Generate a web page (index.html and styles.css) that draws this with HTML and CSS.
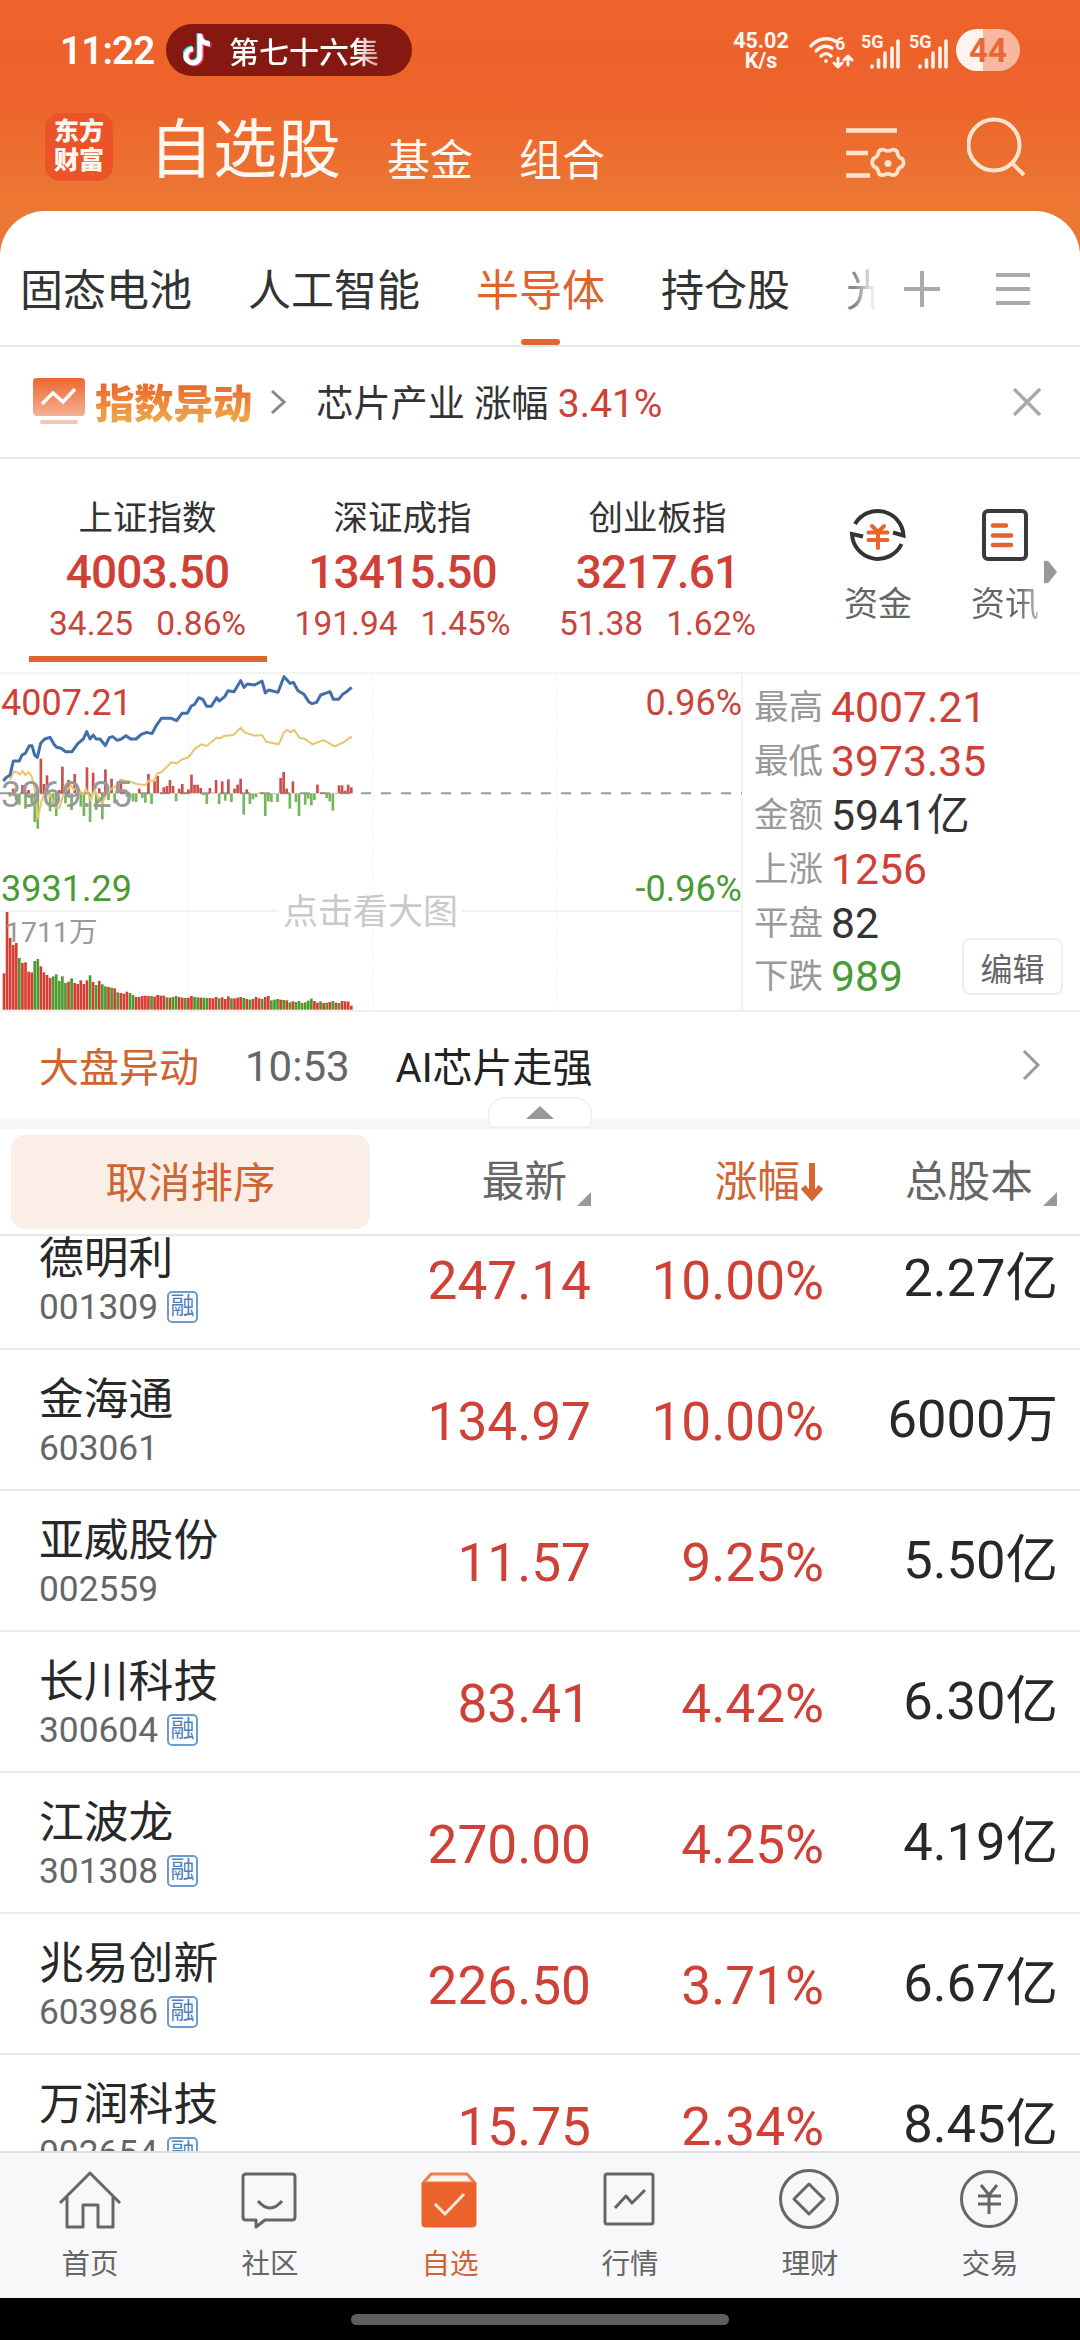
FILE: index.html
```html
<!DOCTYPE html>
<html lang="zh-CN">
<head>
    <meta charset="UTF-8">
    <meta name="viewport" content="width=device-width, initial-scale=1.0">
    <title>自选股</title>
    <link rel="stylesheet" href="styles.css">
</head>
<body>
    <header class="top">
        <div class="status">
            <span class="clock">11:22</span>
            <div class="island">
                <svg width="30" height="34" viewBox="0 0 30 34" fill="none" stroke-width="5">
                    <path d="M17 1v22a7 7 0 1 1-7-7M17 3c1 5 5 8 10 8" stroke="#25e4dd" transform="translate(-1 -1)"/>
                    <path d="M17 1v22a7 7 0 1 1-7-7M17 3c1 5 5 8 10 8" stroke="#f02c60" transform="translate(1.5 1)"/>
                    <path d="M17 1v22a7 7 0 1 1-7-7M17 3c1 5 5 8 10 8" stroke="#fff"/>
                </svg>
                <span class="island-text">第七十六集</span>
            </div>
            <div class="speed"><span>45.02</span><span>K/s</span></div>
            <svg class="wifi" width="46" height="36" viewBox="0 0 46 36" fill="none" stroke="#fff3ec" stroke-width="3.4" stroke-linecap="round">
                <path d="M3 13c7-8 18-9 24-5M8 18c5-5 11-6 16-3M13 23c3-3 7-3 10 0"/>
                <circle cx="18" cy="28" r="1" fill="#fff3ec" stroke-width="2"/>
                <path d="M30 25v9m-4-4 4 4 4-4M40 32v-9m-4 4 4-4 4 4" stroke-width="3" stroke-linejoin="round"/>
                <text x="27" y="17" class="sig-text">6</text>
            </svg>
            <svg class="signal" width="40" height="36" viewBox="0 0 40 36">
                <text x="0" y="15" class="sig-text">5G</text>
                <path d="M11 34v-1M17.500 34v-7M24 34V20M31 34V15M37 34V8" stroke="#fff3ec" stroke-width="3.600" stroke-linecap="round"/>
            </svg>
            <svg class="signal" width="40" height="36" viewBox="0 0 40 36">
                <text x="0" y="15" class="sig-text">5G</text>
                <path d="M11 34v-1M17.500 34v-7M24 34V20M31 34V15M37 34V8" stroke="#fff3ec" stroke-width="3.600" stroke-linecap="round"/>
            </svg>
            <span class="battery">44</span>
        </div>
        <div class="titlebar">
            <div class="logo">东方<br>财富</div>
            <h1>自选股</h1>
            <span class="sub">基金</span>
            <span class="sub">组合</span>
            <svg class="filter" width="62" height="56" viewBox="0 0 62 56" fill="none" stroke="#ffe3cf" stroke-width="4.500">
                <path d="M0 5.500h51M0 28h22M0 50.500h24"/>
                <path d="M37.500 25q4 2.500 8 0 5-1 6 3 .5 5 5 6.500 3 4.500 0 8-4.500 1.500-5 6-2 4-6 3-4-2.500-8 0-5 1-6-3-.5-4.500-5-6-3-4.500 0-8.500 4.500-1.500 5-6 1-4 6-3z" stroke-width="4" transform="translate(2.500 1)  scale(.95)"/>
                <circle cx="42" cy="38.500" r="3.500" fill="#ffe3cf" stroke="none"/>
            </svg>
            <svg class="search" width="60" height="60" viewBox="0 0 60 60" fill="none" stroke="#ffe3cf" stroke-width="4">
                <circle cx="27" cy="28" r="25.500"/>
                <path d="m44 45 13 13"/>
            </svg>
        </div>
    </header>

    <main class="sheet">
        <nav class="tabs">
            <div class="tabs-scroll">
                <span>固态电池</span>
                <span>人工智能</span>
                <span class="on">半导体</span>
                <span>持仓股</span>
                <span class="fade">光</span>
            </div>
            <svg width="36" height="36" viewBox="0 0 36 36" stroke="#aaa" stroke-width="4"><path d="M18 0v36M0 18h36"/></svg>
            <svg class="burger" width="34" height="34" viewBox="0 0 34 34" stroke="#aaa" stroke-width="4"><path d="M0 3h34M0 17h34M0 31h34"/></svg>
        </nav>

        <section class="notice">
            <svg width="52" height="48" viewBox="0 0 52 48">
                <defs>
                    <linearGradient id="g1" x1="0" y1="0" x2="0" y2="1">
                        <stop offset="0" stop-color="#ee6630"/>
                        <stop offset="1" stop-color="#f4b194"/>
                    </linearGradient>
                </defs>
                <rect width="52" height="38" rx="4" fill="url(#g1)"/>
                <path d="m9 26 11-11 10 9 12-13" fill="none" stroke="#fff" stroke-width="3.500"/>
                <rect x="7" y="42" width="38" height="4" rx="2" fill="#f1c8b4"/>
            </svg>
            <b>指数异动</b>
            <svg class="arrow" width="16" height="26" viewBox="0 0 16 26" fill="none" stroke="#888" stroke-width="3"><path d="m2 2 12 11L2 24"/></svg>
            <span class="notice-text">芯片产业 涨幅 <em>3.41%</em></span>
            <svg class="close" width="28" height="28" viewBox="0 0 28 28" stroke="#aaa" stroke-width="3.500"><path d="m1 1 26 26M27 1 1 27"/></svg>
        </section>

        <section class="indexes">
            <div class="index on">
                <span class="name">上证指数</span>
                <strong>4003.50</strong>
                <span class="chg"><i>34.25</i><i>0.86%</i></span>
            </div>
            <div class="index">
                <span class="name">深证成指</span>
                <strong>13415.50</strong>
                <span class="chg"><i>191.94</i><i>1.45%</i></span>
            </div>
            <div class="index">
                <span class="name">创业板指</span>
                <strong>3217.61</strong>
                <span class="chg"><i>51.38</i><i>1.62%</i></span>
            </div>
            <div class="tool money">
                <svg width="60" height="60" viewBox="0 0 60 60" fill="none" stroke="#333" stroke-width="4">
                    <path d="M7 20A26 26 0 0 1 55.500 31.500L45 28.500M53.500 40A26 26 0 0 1 4 30L15 32.500"/>
                    <path d="m24 22 6 6 6-6M20.500 28.500h19M20.500 36h19M30 28v16" stroke="#ea642c" stroke-linecap="round"/>
                </svg>
                <span>资金</span>
            </div>
            <div class="tool news">
                <svg width="60" height="60" viewBox="0 0 60 60" fill="none" stroke="#3a3a3a" stroke-width="4">
                    <rect x="9" y="7" width="42" height="48" rx="4"/>
                    <path d="M18 21.500h13M18 31.500h18M18 41h18" stroke="#e2632d" stroke-width="4.500" stroke-linecap="round"/>
                </svg>
                <span>资讯</span>
            </div>
            <svg class="more" width="14" height="24" viewBox="0 0 14 24"><path d="M0 1q3-1 5 1l8 10-8 10q-2 2-5 1z" fill="#999"/></svg>
        </section>

        <section class="market">
            <div class="chart">
                <svg id="chart" width="742" height="337" viewBox="0 27 2226 1011">
                    <g stroke="#e6e6e6" stroke-width="3" stroke-dasharray="4 6">
                        <path d="M566 30v1004M1119 30v1004M1671 30v1004"/>
                    </g>
                    <path d="M0 738h835M1386 738h840" stroke="#eee" stroke-width="5"/>
                    <path d="M0 385h1055M1083 385h1143" stroke="#999" stroke-width="6" stroke-dasharray="30 30"/>
                    <g id="bars"></g>
                    <polyline fill="none" stroke="#e9c46d" stroke-width="6" points="30,345 40,320 52,322 60,328 68,318 76,330 86,322 94,332 102,360 108,400 114,460 124,410 132,388 146,385 156,400 166,428 178,428 190,390 202,375 212,360 222,375 232,365 248,390 258,372 272,405 284,375 294,395 306,415 318,390 330,375 345,365 366,345 390,350 410,357 436,360 446,347 462,347 472,325 484,322 514,292 530,295 546,283 564,278 586,250 604,238 620,243 650,218 660,220 672,213 700,210 722,188 734,202 764,212 786,210 798,230 836,238 852,202 862,195 872,202 882,195 898,218 914,222 938,238 970,225 1004,244 1030,232 1055,215"/>
                    <polyline fill="none" stroke="#426eae" stroke-width="9" stroke-linejoin="round" points="10,348 18,338 30,330 40,288 58,288 66,270 76,265 88,242 96,242 104,270 112,277 122,235 134,222 150,217 162,238 170,247 184,250 196,260 216,260 234,235 250,222 260,200 270,222 280,210 288,222 300,222 316,242 328,218 338,215 352,226 364,222 378,212 392,222 408,222 424,208 440,202 456,206 468,183 484,160 514,160 530,167 546,145 562,145 574,123 584,118 596,98 608,103 620,124 634,124 650,98 658,108 674,95 684,77 702,80 722,47 732,67 742,57 764,60 786,48 796,84 806,75 834,82 852,35 870,55 880,52 894,77 912,88 926,110 936,116 950,112 962,90 990,80 1000,103 1016,103 1028,88 1040,80 1055,67"/>
                </svg>
                <span class="lab high">4007.21</span>
                <span class="lab mid">3969.25</span>
                <span class="lab low">3931.29</span>
                <span class="lab pct-high">0.96%</span>
                <span class="lab pct-low">-0.96%</span>
                <span class="lab vol">1711万</span>
                <span class="lab tip">点击看大图</span>
            </div>
            <div class="stats">
                <p><span>最高</span><b class="red">4007.21</b></p>
                <p><span>最低</span><b class="red">3973.35</b></p>
                <p><span>金额</span><b>5941亿</b></p>
                <p><span>上涨</span><b class="red">1256</b></p>
                <p><span>平盘</span><b>82</b></p>
                <p><span>下跌</span><b class="green">989</b></p>
                <button class="edit">编辑</button>
            </div>
        </section>

        <section class="flash">
            <span class="flash-tag">大盘异动</span>
            <span class="flash-time">10:53</span>
            <span class="flash-text">AI芯片走强</span>
            <svg width="18" height="32" viewBox="0 0 18 32" fill="none" stroke="#999" stroke-width="3"><path d="m2 2 14 14L2 30"/></svg>
            <div class="handle"><svg width="28" height="13" viewBox="0 0 28 13"><path d="M14 0 28 13H0z" fill="#999"/></svg></div>
        </section>

        <section class="thead">
            <button class="reset">取消排序</button>
            <span class="c1">最新<i class="tri"></i></span>
            <span class="c2">涨幅<svg width="22" height="40" viewBox="0 0 22 40" fill="none" stroke="#d9662e"><path d="M11 1v34" stroke-width="6"/><path d="m2 25 9 10 9-10" stroke-width="6"/></svg></span>
            <span class="c3">总股本<i class="tri"></i></span>
        </section>

        <section class="list">
            <div class="row"><div class="stock"><span>德明利</span><small>001309<i>融</i></small></div><span class="c1">247.14</span><span class="c2">10.00%</span><span class="c3">2.27亿</span></div>
            <div class="row"><div class="stock"><span>金海通</span><small>603061</small></div><span class="c1">134.97</span><span class="c2">10.00%</span><span class="c3">6000万</span></div>
            <div class="row"><div class="stock"><span>亚威股份</span><small>002559</small></div><span class="c1">11.57</span><span class="c2">9.25%</span><span class="c3">5.50亿</span></div>
            <div class="row"><div class="stock"><span>长川科技</span><small>300604<i>融</i></small></div><span class="c1">83.41</span><span class="c2">4.42%</span><span class="c3">6.30亿</span></div>
            <div class="row"><div class="stock"><span>江波龙</span><small>301308<i>融</i></small></div><span class="c1">270.00</span><span class="c2">4.25%</span><span class="c3">4.19亿</span></div>
            <div class="row"><div class="stock"><span>兆易创新</span><small>603986<i>融</i></small></div><span class="c1">226.50</span><span class="c2">3.71%</span><span class="c3">6.67亿</span></div>
            <div class="row"><div class="stock"><span>万润科技</span><small>002654<i>融</i></small></div><span class="c1">15.75</span><span class="c2">2.34%</span><span class="c3">8.45亿</span></div>
        </section>
    </main>

    <footer class="bottom">
        <a>
            <svg width="64" height="64" viewBox="0 0 64 64"><path d="M2 35 32 5l30 30M9 29v30h16V37h15v22h15V29"/></svg>
            首页
        </a>
        <a>
            <svg width="64" height="64" viewBox="0 0 64 64"><path d="M8 6h46q3 0 3 3v40q0 3-3 3H27l-9 7v-7H8q-3 0-3-3V9q0-3 3-3zM20 33q12 14 24 0"/></svg>
            社区
        </a>
        <a class="on">
            <svg width="64" height="64" viewBox="0 0 64 64"><path class="lid" d="M13 6h36l8 9H5z"/><path class="box" d="M5 16h52v39q0 3-3 3H8q-3 0-3-3z"/><path class="tick" d="m17 36 10 10 19-20"/></svg>
            自选
        </a>
        <a>
            <svg width="64" height="64" viewBox="0 0 64 64"><rect x="7" y="6" width="48" height="50" rx="2"/><path d="m17 40 11-12 6 7 13-13"/></svg>
            行情
        </a>
        <a>
            <svg width="64" height="64" viewBox="0 0 64 64"><circle cx="31" cy="31" r="28.500"/><path d="M31 16 46 31 31 46 16 31z"/></svg>
            理财
        </a>
        <a>
            <svg width="64" height="64" viewBox="0 0 64 64"><circle cx="31" cy="31" r="27.500"/><path d="m23 17 8 10 8-10M20 28h23M20 36h23M31 27v19"/></svg>
            交易
        </a>
    </footer>
    <div class="gesture"><span></span></div>

    <script src="script.js"></script>
</body>
</html>
```

FILE: styles.css
```css
* {
    box-sizing: border-box;
}

body {
    margin: 0;
    width: 1080px;
    height: 2340px;
    overflow: hidden;
    background: #fff;
    color: #333;
    font-family: Roboto, "Noto Sans CJK SC", sans-serif;
}

h1, p {
    margin: 0;
    font-weight: 400;
}

i, em {
    font-style: normal;
}

svg {
    display: block;
    flex: none;
}

button {
    padding: 0;
    font-family: inherit;
}

span, strong, b {
    white-space: nowrap;
}

.red {
    color: #cf4037;
}

.green {
    color: #4a9a35;
}

/* header */
.top {
    height: 256px;
    margin-bottom: -45px;
    background: linear-gradient(#ee622b 0, #ed632b 100px, #ec7733 200px);
    color: #fff8f2;
}

.status {
    display: flex;
    align-items: flex-start;
    height: 100px;
    padding: 24px 0 0 60px;
}

.clock {
    width: 106px;
    font-size: 38.5px;
    line-height: 53px;
    font-weight: 600;
    letter-spacing: -0.8px;
    color: #fff;
}

.island {
    display: flex;
    align-items: center;
    width: 246px;
    height: 52px;
    padding-left: 17px;
    border-radius: 26px;
    background: #851810;
    color: #fff;
}

.island-text {
    margin-left: 16px;
    font-size: 30px;
    font-weight: 500;
    background: linear-gradient(90deg, #fff 84%, #c99 100%);
    -webkit-background-clip: text;
    color: transparent;
}

.speed {
    display: flex;
    flex-direction: column;
    align-items: center;
    width: 64px;
    margin: 7px 0 0 317px;
    font-size: 21.5px;
    line-height: 20px;
    font-weight: 700;
}

.wifi {
    margin: 9px 0 0 15px;
}

.signal {
    margin: 9px 0 0 6px;
    overflow: visible;
}

.wifi + .signal {
    margin-left: 7px;
}

.signal + .signal {
    margin-left: 8px;
}

.sig-text {
    font-size: 18px;
    font-weight: 700;
    fill: #fff3ec;
    stroke: none;
}

.battery {
    width: 64px;
    height: 42px;
    margin: 5px 0 0 7px;
    border-radius: 21px;
    background: linear-gradient(90deg, #fff3ef 42%, #f9b79f 42%);
    color: #e8683a;
    font-size: 33px;
    line-height: 43px;
    font-weight: 700;
    text-align: center;
}

.titlebar {
    display: flex;
    align-items: flex-start;
    padding: 13px 0 0 45px;
}

.logo {
    width: 68px;
    height: 68px;
    padding-top: 4px;
    border-radius: 15px;
    background: #ea5428;
    font-size: 25px;
    line-height: 29px;
    font-weight: 800;
    text-align: center;
}

.titlebar h1 {
    margin: -7px 0 0 36px;
    font-size: 64px;
    line-height: 90px;
}

.sub {
    margin: 16px 0 0 46px;
    font-size: 43px;
    line-height: 64px;
}

.filter {
    margin: 12px 0 0 241px;
}

.search {
    margin: 4px 0 0 59px;
}

/* white sheet */
.sheet {
    border-radius: 45px 45px 0 0;
    background: #fff;
}

.tabs {
    display: flex;
    align-items: center;
    height: 136px;
    padding: 22px 0 0 20px;
    border-bottom: 2px solid #e6e6e6;
}

.tabs-scroll {
    display: flex;
    gap: 56px;
    width: 855px;
    margin-right: 29px;
    overflow: hidden;
    font-size: 43px;
    line-height: 117px;
    height: 112px;
}

.tabs-scroll .on {
    position: relative;
    color: #dd642f;
}

.tabs-scroll .on::after {
    content: "";
    position: absolute;
    left: 45px;
    top: 106px;
    width: 39px;
    height: 6px;
    border-radius: 3px;
    background: #e2652f;
}

.tabs-scroll .fade {
    background: linear-gradient(90deg, #888 20%, #fff 70%);
    -webkit-background-clip: text;
    color: transparent;
}

.burger {
    margin-left: 56px;
}

.notice {
    display: flex;
    align-items: center;
    height: 112px;
    padding: 0 0 1px 33px;
    border-bottom: 2px solid #e8e8e8;
    color: #333;
}

.notice b {
    margin: -2px 0 0 10px;
    font-size: 39.3px;
    font-weight: 900;
    background: linear-gradient(#ec6a2f 25%, #eda345 80%);
    -webkit-background-clip: text;
    color: transparent;
}

.notice .arrow {
    margin-left: 18px;
}

.notice-text {
    margin: -1px 0 0 30px;
    font-size: 37.2px;
}

.notice-text em {
    font-size: 39px;
    color: #cf4037;
}

.notice .close {
    margin: 0 39px 0 auto;
}

.indexes {
    display: flex;
    height: 215px;
    padding-left: 20px;
    border-bottom: 2px solid #f3f3f3;
}

.index {
    display: flex;
    flex-direction: column;
    align-items: center;
    width: 255px;
    height: 203px;
    padding-top: 33px;
    color: #c8453d;
}

.index.on {
    background: linear-gradient(#e2652f, #e2652f) center bottom / 238px 6px no-repeat;
}

.index .name {
    color: #333;
    font-size: 34.5px;
    line-height: 52px;
}

.index strong {
    font-size: 46px;
    line-height: 56px;
    font-weight: 500;
    letter-spacing: -0.9px;
    color: #cf4037;
}

.chg {
    display: flex;
    gap: 23px;
    font-size: 33.5px;
    line-height: 48px;
}

.tool {
    display: flex;
    flex-direction: column;
    align-items: center;
    width: 70px;
    padding-top: 45px;
    color: #666;
    font-size: 34px;
    line-height: 54px;
}

.tool span {
    margin-top: 13px;
}

.tool.money {
    margin-left: 58px;
}

.tool.news {
    margin-left: 57px;
}

.news span {
    background: linear-gradient(90deg, #666 70%, #bbb);
    -webkit-background-clip: text;
    color: transparent;
}

.more {
    margin: 101px 0 0 4px;
}

/* chart and figures */
.market {
    display: flex;
    height: 338px;
    border-bottom: 2px solid #f0f0f0;
}

.chart {
    position: relative;
    width: 743px;
    border-right: 2px solid #f3f3f3;
}

.lab {
    position: absolute;
    font-size: 36px;
    line-height: 40px;
}

.high {
    left: 1px;
    top: 9px;
    color: #cf4037;
}

.mid {
    left: 1px;
    top: 101px;
    color: #999;
}

.low {
    left: 1px;
    top: 195px;
    color: #4a9a35;
}

.pct-high {
    right: -1px;
    top: 9px;
    color: #c8453d;
}

.pct-low {
    right: -1px;
    top: 195px;
    color: #4a9a35;
}

.vol {
    left: 5px;
    top: 239px;
    font-size: 28.5px;
    color: #999;
}

.tip {
    left: 283px;
    top: 219px;
    font-size: 35px;
    color: #c9c9c9;
}

.stats {
    position: relative;
    flex: 1;
    padding: 6px 0 0 11px;
}

.stats p {
    display: flex;
    align-items: center;
    height: 53.9px;
    line-height: 54px;
}

.stats span {
    width: 77px;
    font-size: 34.5px;
    color: #999;
}

.stats b {
    font-size: 42.7px;
    font-weight: 400;
}

.edit {
    position: absolute;
    right: 17px;
    bottom: 15px;
    width: 101px;
    height: 57px;
    border: 2px solid #eee;
    border-radius: 8px;
    background: #fff;
    color: #666;
    font-size: 32px;
}

.flash {
    position: relative;
    display: flex;
    align-items: center;
    height: 117px;
    padding: 4px 0 0 39px;
    border-bottom: 11px solid #f5f7f9;
    font-size: 40px;
    line-height: 60px;
    color: #222;
}

.flash-tag {
    margin-top: 3px;
    color: #d0632f;
}

.flash-time {
    margin-left: 46px;
    font-size: 42px;
    color: #666;
}

.flash-text {
    margin: 3px auto 0 46px;
}

.flash > svg {
    margin: 0 40px 4px 0;
}

.handle {
    position: absolute;
    left: 488px;
    bottom: -10px;
    display: flex;
    justify-content: center;
    align-items: center;
    width: 104px;
    height: 31px;
    border: 2px solid #f2f2f2;
    border-radius: 16px 16px 0 0;
    background: #fff;
}

/* stock table */
.thead {
    display: flex;
    align-items: center;
    height: 107px;
    padding-left: 11px;
    border-bottom: 2px solid #e8e8e8;
    font-size: 42.7px;
    line-height: 60px;
    color: #666;
}

.reset {
    width: 359px;
    height: 94px;
    padding-bottom: 5px;
    border: 0;
    border-radius: 14px;
    background: #fbeee7;
    color: #cf6532;
    font-size: 42.5px;
}

.thead > span {
    display: flex;
    justify-content: flex-end;
    align-items: center;
}

.tri {
    align-self: flex-end;
    margin: 0 0 6px 10px;
    border-left: 14px solid transparent;
    border-bottom: 14px solid #999;
}

.thead .c1 {
    width: 221px;
}

.thead .c2 {
    width: 232px;
    color: #cf6532;
}

.thead .c2 svg {
    margin-left: 1px;
}

.thead .c3 {
    width: 234px;
}

.list {
    height: 915px;
    overflow: hidden;
}

.row {
    display: flex;
    height: 141px;
    padding-left: 39px;
    border-bottom: 2px solid #ebebeb;
    font-size: 53.2px;
    line-height: 145px;
    color: #cf4037;
    text-align: right;
}

.row:first-child {
    margin-top: -27px;
}

.stock {
    display: flex;
    flex-direction: column;
    width: 300px;
    padding-top: 20px;
    text-align: left;
    color: #282828;
    font-size: 44.8px;
    line-height: 60px;
}

.stock small {
    display: flex;
    align-items: center;
    margin-top: -2px;
    font-size: 35.3px;
    line-height: 40px;
    color: #666;
}

.stock i {
    width: 31px;
    height: 32px;
    margin-left: 9px;
    border: 2px solid #6d9bcb;
    border-radius: 5px;
    color: #4f82bd;
    font-size: 24px;
    line-height: 27px;
    text-align: center;
}

.row .c1 {
    width: 252px;
}

.row .c2 {
    width: 233px;
}

.row .c3 {
    width: 234px;
    font-size: 52.5px;
    line-height: 139px;
    color: #282828;
}

/* bottom navigation */
.bottom {
    display: flex;
    height: 147px;
    border-top: 2px solid #e0e0e0;
    background: #f8f8fa;
}

.bottom a {
    display: flex;
    flex-direction: column;
    align-items: center;
    width: 180px;
    padding-top: 15px;
    font-size: 28.5px;
    line-height: 42px;
    color: #666;
}

.bottom svg {
    margin-bottom: 12px;
    fill: none;
    stroke: #666;
    stroke-width: 3;
    stroke-linejoin: round;
}

.bottom .on {
    color: #cf6532;
}

.bottom .lid {
    fill: #fff3ec;
    stroke: #ee8050;
}

.bottom .box {
    fill: #ec622b;
    stroke: #ec622b;
}

.bottom .tick {
    stroke: #ffe6d8;
}

.gesture {
    height: 42px;
    padding-top: 16px;
    background: #000;
}

.gesture span {
    display: block;
    width: 378px;
    height: 11px;
    margin: 0 auto;
    border-radius: 6px;
    background: #5e5e5e;
}
```

FILE: script.js
```js
// positive = red bar up, negative = green bar down
const flow = [
    0, 0, -10, 14, -20, -34, 25, -46, 10, -30, -86, -106, 104, 28, 54, -54, -40, -68, 10, 80,
    -30, 40, -50, 58, -10, -40, -68, 78, -86, 62, -50, 15, -78, 72, -20, 44, -30, 30, 42, 10,
    -10, -15, -24, -26, 14, -14, -28, 58, -32, 36, 52, 2, 18, 22, 40, 22, -24, 14, 28, 2,
    12, 56, 26, 26, 16, -5, -32, 16, 2, 40, -32, 36, -22, 42, -26, 14, 26, 44, -64, 12,
    -32, -18, -12, 2, 2, -68, -24, -26, -2, -26, 46, 64, 14, -46, 36, -26, -68, -2, -34, -16,
    -36, -20, 26, 2, 2, -14, -24, -52, -2, 24, 24, 8, 26, 18
];

// volume, negative = green
const volume = [
    109, 293, 215, 194, 200, -155, 140, 142, 114, 112, -146, -152, 130, 112, 104, 95, -100, -106, -86, -100,
    -80, 84, -94, 80, 77, 88, 77, 88, -103, 83, -74, 86, -76, -70, 68, -66, 64, -52, 50, 48,
    54, -50, -44, 38, 38, 41, 42, 41, -41, 39, 44, 42, 42, -37, 36, -38, -41, 38, 36, -35,
    36, 41, -38, -37, 36, -36, -35, 35, 34, 38, -34, 37, 32, 40, -34, 34, 36, 38, -35, 32,
    -30, 32, 38, 34, -32, 38, 41, -28, -30, -32, 30, -29, 28, -22, 25, -23, -26, -20, -22, -27,
    -33, 26, 21, -25, 20, -21, 23, -26, 21, -20, 26, 25, 24, 12
];

function rect(x, y, h, color) {
    return `<rect x="${x.toFixed(1)}" y="${y}" width="8" height="${h}" fill="${color}"/>`;
}

let html = '';
for (let i = 0; i < flow.length; i++) {
    const x = 8 + i * 9.22;
    const f = flow[i];
    if (f) {
        html += rect(x, f > 0 ? 385 - f : 385, Math.abs(f), f > 0 ? '#c9514a' : '#77b55c');
    }
    const v = volume[i];
    html += rect(x, 1034 - Math.abs(v), Math.abs(v), v > 0 ? '#d93c34' : '#4a9a2c');
}
document.getElementById('bars').innerHTML = html;
```
